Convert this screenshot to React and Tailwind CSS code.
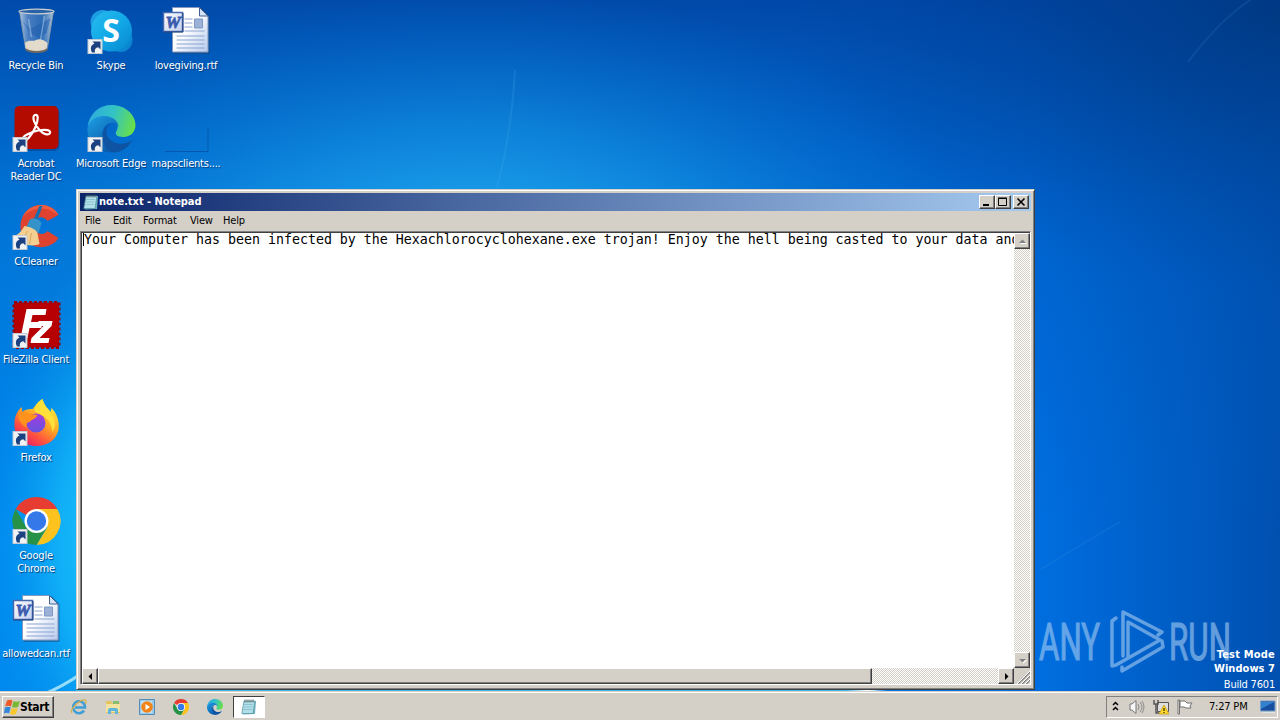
const raised = "border border-t-white border-l-white border-r-[#404040] border-b-[#404040] bg-[#d4d0c8] shadow-[inset_-1px_-1px_#808080]"
const dither = "bg-[repeating-conic-gradient(#d4d0c8_0_25%,#ffffff_0_50%)] bg-[length:2px_2px]"

function Shortcut() {
  return (
    <g>
      <rect x="0.5" y="32.5" width="14" height="14" fill="#f0f2f4" stroke="#c3cad4" />
      <path d="M4.500 45.500c-2-4-1.200-7.500 2.500-9L5 34.500h8v8l-2.200-2.200c-3 .4-4 2.200-3.300 5.200z" fill="#1c4180" />
    </g>
  )
}

function RecycleBin() {
  return (
    <>
      <defs>
        <linearGradient id="bin" x1="0" x2="1">
          <stop offset="0" stopColor="#dce8f2" stopOpacity=".8" />
          <stop offset=".25" stopColor="#6b93c8" stopOpacity=".7" />
          <stop offset=".65" stopColor="#437ab9" stopOpacity=".65" />
          <stop offset="1" stopColor="#d2dde4" stopOpacity=".85" />
        </linearGradient>
      </defs>
      <path d="M7 4h34l-6 37c-1 5-21 5-22 0z" fill="url(#bin)" stroke="#8f9ca5" strokeWidth=".8" />
      <ellipse cx="24" cy="4.500" rx="17.500" ry="2.400" fill="#2862a9" stroke="#c9cdcc" strokeWidth="1.200" />
      <path d="m9 13 8 9 8-4 13-7-4 15-8 5-8-5z" fill="#1d5cab" opacity=".5" />
      <path d="m16 12 3 18m13-21-4 24" stroke="#a9c8e8" strokeOpacity=".55" strokeWidth="1.500" />
      <path d="M12.500 36c4-4 7-1 11-3s8 0 11.500 3l-1 6c-4 3-17 3-21 0z" fill="#e2dacb" />
      <path d="M13 41c4 4 18 4 22 0v2c-3 4-19 4-22 0z" fill="#71695f" />
    </>
  )
}

function SkypeIcon() {
  return (
    <>
      <defs>
        <linearGradient id="sky" x1="0" y1="0" x2="1" y2="1">
          <stop offset="0" stopColor="#28bbee" />
          <stop offset=".5" stopColor="#12a9e7" />
          <stop offset="1" stopColor="#0785ce" />
        </linearGradient>
      </defs>
      <circle cx="15" cy="15" r="12" fill="#1c9ce2" />
      <circle cx="33" cy="33" r="12" fill="#0b87d1" />
      <circle cx="24" cy="24" r="20.500" fill="url(#sky)" />
      <text x="23.500" y="35" textAnchor="middle" fill="#fff" className="font-['Open_Sans',sans-serif] text-[32px] font-bold">S</text>
      <Shortcut />
    </>
  )
}

function WordIcon() {
  return (
    <>
      <defs>
        <linearGradient id="paper" x1="0" y1="0" x2="1" y2="1">
          <stop offset=".45" stopColor="#fff" />
          <stop offset="1" stopColor="#b6c9ed" />
        </linearGradient>
        <linearGradient id="wordBox" x1="0" y1="0" x2="1" y2="1">
          <stop offset="0" stopColor="#fff" />
          <stop offset="1" stopColor="#c3cfee" />
        </linearGradient>
      </defs>
      <path d="M11 1h28l8 8v38H11z" fill="#25466f" opacity=".5" />
      <path d="M10 .5h27l8.500 8.500v36H10z" fill="url(#paper)" stroke="#8199bf" />
      <path d="M37 .5V9h8.500z" fill="#d5e1f4" stroke="#40618e" />
      <path d="M22 12h8m-8 4h8m-8 4h8M14 29h28m-28 4h28m-28 4h28m-28 4h28M22 24h20" stroke="#8ba4d0" />
      <path d="M32 12h8v9h-8z" fill="#9cb1d6" stroke="#7d98c4" />
      <path d="M1 5.500h19v19H1z" fill="url(#wordBox)" stroke="#4668ad" strokeWidth="1.500" />
      <text x="10.500" y="21" textAnchor="middle" fill="#3c5cae" stroke="#3c5cae" strokeWidth=".8" className="font-['Liberation_Serif',serif] text-[17px] font-bold italic">W</text>
      <path d="M1 25h19.500V6" fill="none" stroke="#22407e" />
    </>
  )
}

function AcrobatIcon() {
  return (
    <>
      <rect x="3" y="3" width="44" height="43" rx="5" fill="#06377d" opacity=".5" />
      <rect x="2" y="1" width="44" height="43" rx="5" fill="#b30b00" />
      <path d="M22.500 10c3.500-1.500 3.500 5 .5 12-3.500 8-9.500 15.500-12.500 13-3-3 9-8.500 15-9.500 8-1.500 13-.5 12 2.500-1.500 3-7 1-10.500-3-5-5-8-13.500-4.500-15z" fill="none" stroke="#fff" strokeWidth="2.200" />
      <Shortcut />
    </>
  )
}

function EdgeArt({ id }) {
  return (
    <>
      <defs>
        <linearGradient id={`${id}a`} x1="0" y1=".4" x2="1" y2=".6">
          <stop offset="0" stopColor="#2fabe0" />
          <stop offset=".5" stopColor="#33c3c4" />
          <stop offset="1" stopColor="#6be044" />
        </linearGradient>
        <linearGradient id={`${id}b`} x1="0" y1="0" x2=".7" y2="1">
          <stop offset="0" stopColor="#1c9fe4" />
          <stop offset="1" stopColor="#0c58a8" />
        </linearGradient>
      </defs>
      <path d="M0 22C2 8 12 0 24 0c14 0 24 10 24 20 0 7-5 12-12 12-7 0-9-3-7-6 4-7-2-13-11-14C10 11 4 15 0 22z" fill={`url(#${id}a)`} />
      <path d="M0 23c2-8 9-12 17-12 8 0 14 5 14 11-1-3-5-5-8-4-8 2-10 10-6 18 3 6 8 10 13 11C12 50-1 38 0 23z" fill={`url(#${id}b)`} />
      <path d="M23 18c-5 3-6 12 0 17 7 6 16 4 22 0-5 9-13 13-20 12-12-4-14-24-2-29z" fill="#0e54a2" />
    </>
  )
}

function CCleanerIcon() {
  return (
    <>
      <path d="M46 12C38-2 17-1 10 14 3 29 15 46 31 44c7-1 12-4 15-9l-11-7c-4 5-11 3-13-2-3-10 7-16 13-8z" fill="#df4330" />
      <path d="M46 12C38-2 17-1 10 14c8-8 20-11 29-6z" fill="#f05c40" />
      <path d="m30 3-7 19-4-1L27 3z" fill="#1370ad" />
      <path d="M17 17c4-3 10-1 12 3l-3 10-12-6z" fill="#3693ca" />
      <path d="M12 23c6 1 11 3 13 7l2 11c-10 4-20-1-26-8 5-1 8-5 11-10z" fill="#f4cf91" />
      <path d="m15 28-5 10m9-8-2 11" stroke="#d8a75f" />
      <Shortcut />
    </>
  )
}

function FileZillaIcon() {
  return (
    <>
      <rect x="1.500" y="1.500" width="45" height="45" fill="#b50004" stroke="#9b0208" strokeWidth="3" strokeDasharray="3 2" />
      <path d="M2.500 2.500h43v43h-43z" fill="#b60003" />
      <path d="M8 37 14 8h20l-1 6H20l-1.500 7H30l-1.200 6H17l-2 10zm18-17h14l-1 5-12 12h10l-1 5H18l1-5 12-12h-6z" fill="#fff" />
      <Shortcut />
    </>
  )
}

function FirefoxIcon() {
  return (
    <>
      <defs>
        <linearGradient id="ff" x1=".9" y1=".1" x2=".3" y2="1">
          <stop offset="0" stopColor="#fff23d" />
          <stop offset=".45" stopColor="#ffa425" />
          <stop offset=".75" stopColor="#ff5140" />
          <stop offset="1" stopColor="#e81f65" />
        </linearGradient>
        <linearGradient id="globe" x1="0" y1="0" x2="0" y2="1">
          <stop offset="0" stopColor="#a53bdf" />
          <stop offset="1" stopColor="#6653df" />
        </linearGradient>
      </defs>
      <path d="M30 0c2 7 5 9 8 13l1-4c6 6 8 14 7 22-3 11-12 16-22 16C10 47 1 37 2 24c0-7 3-12 7-16l1 5c3-3 7-3 10-3 2-1 3-6 10-10z" fill="url(#ff)" />
      <path d="M30 0c2 7 5 9 8 13 5 7 6 14 2 20-1-10-6-16-17-20-3-4 1-8 7-13z" fill="#ffe03b" />
      <circle cx="23.500" cy="24" r="9.500" fill="url(#globe)" />
      <path d="M6 15c3-4 8-2 12 0l7 1c-1 4-6 4-8 7-3 0-4 3-3 6-5-4-9-8-8-14z" fill="#ff911d" />
      <Shortcut />
    </>
  )
}

function ChromeArt() {
  return (
    <>
      <path d="M24 24 3.200 12A24 24 0 0 1 44.800 12z" fill="#e63c31" />
      <path d="M24 12h20.800A24 24 0 0 1 24 48l11-18z" fill="#fcc31e" />
      <path d="M3.200 12A24 24 0 0 0 24 48l10.400-18H13.600z" fill="#279247" />
      <circle cx="24" cy="24" r="12" fill="#fff" />
      <circle cx="24" cy="24" r="9.700" fill="#3478ea" />
    </>
  )
}

function NotepadArt() {
  return (
    <>
      <path d="M4 2h11l-1 13-12 .5z" fill="#6db4c5" />
      <path d="M3 2h11l-2 12.500H.8z" fill="#b3e0e8" stroke="#4f8c9b" strokeWidth=".7" />
      <path d="M3 5.500h9M2.500 8h9M2 10.500h9" stroke="#7db8c6" strokeWidth=".7" />
      <path d="M4 .5v3m2-3v3m2-3v3m2-3v3m2-3v3" stroke="#485057" strokeWidth=".8" />
    </>
  )
}

function DesktopIcon({ label, children }) {
  return (
    <div className="flex h-[98px] w-[75px] shrink-0 flex-col items-center">
      <svg className="ml-px h-12 w-12 shrink-0 overflow-visible" viewBox="0 0 48 48">{children}</svg>
      <span className="mt-1 w-[90px] whitespace-pre text-center leading-[13px] text-white [text-shadow:1px_1px_1px_#003878]">{label}</span>
    </div>
  )
}

function Wallpaper() {
  return (
    <svg className="absolute inset-0 h-full w-full" viewBox="0 0 1280 720" preserveAspectRatio="none">
      <defs>
        <linearGradient id="base" x1="0" x2="1">
          <stop offset="0" stopColor="#0089ee" />
          <stop offset=".4" stopColor="#0789e6" />
          <stop offset=".81" stopColor="#006ee0" />
          <stop offset="1" stopColor="#0050b0" />
        </linearGradient>
        <linearGradient id="top" x1="0" y1="0" x2="0" y2="1">
          <stop offset="0" stopColor="#003f9f" stopOpacity=".85" />
          <stop offset=".28" stopColor="#004fae" stopOpacity=".4" />
          <stop offset=".75" stopColor="#0060c0" stopOpacity="0" />
        </linearGradient>
        <radialGradient id="glow" gradientUnits="userSpaceOnUse" cx="0" cy="0" r="1" gradientTransform="translate(470 270) scale(520 285)">
          <stop offset="0" stopColor="#28b5f5" />
          <stop offset=".5" stopColor="#1598e9" stopOpacity=".55" />
          <stop offset="1" stopColor="#0070d5" stopOpacity="0" />
        </radialGradient>
        <radialGradient id="cyan" gradientUnits="userSpaceOnUse" cx="0" cy="0" r="1" gradientTransform="translate(130 540) scale(150 290)">
          <stop offset="0" stopColor="#27d3ff" />
          <stop offset=".5" stopColor="#14b9fa" stopOpacity=".75" />
          <stop offset="1" stopColor="#0090ef" stopOpacity="0" />
        </radialGradient>
        <radialGradient id="corner" cx="1" cy=".02" r=".38">
          <stop offset="0" stopColor="#003678" stopOpacity=".7" />
          <stop offset="1" stopColor="#004091" stopOpacity="0" />
        </radialGradient>
        <linearGradient id="flare">
          <stop offset="0" stopColor="#fff" stopOpacity="0" />
          <stop offset=".5" stopColor="#fff" />
          <stop offset="1" stopColor="#fff" stopOpacity="0" />
        </linearGradient>
      </defs>
      <path d="M0 0h1280v720H0z" fill="url(#base)" />
      <path d="M0 0h1280v720H0z" fill="url(#top)" />
      <path d="M0 0h1280v720H0z" fill="url(#glow)" />
      <path d="M0 0h1280v720H0z" fill="url(#cyan)" />
      <path d="M0 0h1280v720H0z" fill="url(#corner)" />
      <path d="M515 70q-3 60-18 118" fill="none" stroke="#58b9f3" strokeOpacity=".16" strokeWidth="2" />
      <path d="M1250 0q-32 22-62 62M1040 570q38-24 80-48" fill="none" stroke="#58a6e8" strokeOpacity=".13" strokeWidth="2" />
      <path d="M42 695q22-9 40-22" fill="none" stroke="#c5f4ff" strokeWidth="3" opacity=".75" />
      <path d="M76 691h800" stroke="#3db9f0" strokeWidth="2" />
      <path d="M846 690h42v2h-42z" fill="url(#flare)" />
    </svg>
  )
}

function Watermark() {
  return (
    <svg className="absolute left-[1036px] top-[606px] h-[70px] w-[200px]" viewBox="0 0 200 70">
      <g fill="#a6ccf2" stroke="#a6ccf2" strokeWidth="1.200" opacity=".6" className="font-[Roboto,sans-serif] text-[51px] tracking-normal">
        <text x="3" y="54" textLength="61" lengthAdjust="spacingAndGlyphs">ANY</text>
        <text x="133" y="54" textLength="62" lengthAdjust="spacingAndGlyphs">RUN</text>
      </g>
      <g fill="none" stroke="#a6ccf2" strokeWidth="3.500" strokeLinejoin="round" strokeLinecap="round" opacity=".6">
        <path d="m80 12-4 3v45l4-1 44-25-32-18v36" />
        <path d="m122 29 4-3-39-20v44M86 61v4l41-24-1-6" />
      </g>
    </svg>
  )
}

function ScrollButton({ d, dim }) {
  return (
    <div className={`flex h-4 w-4 shrink-0 items-center justify-center ${raised}`}>
      <svg className="h-[9px] w-[9px]" viewBox="0 0 9 9">
        {dim && <path d={d} fill="#fff" transform="translate(1 1)" />}
        <path d={d} fill={dim ? "#808080" : "#000"} />
      </svg>
    </div>
  )
}

function NotepadWindow() {
  return (
    <div className="absolute left-[76px] top-[189px] flex h-[501px] w-[959px] flex-col border border-b-[#404040] border-l-[#d4d0c8] border-r-[#404040] border-t-[#d4d0c8] bg-[#d4d0c8] p-[3px] pb-1 shadow-[inset_1px_1px_#fff,inset_-1px_-1px_#808080]">
      <div className="flex h-[18px] shrink-0 items-center bg-linear-to-r/srgb from-[#0a246a] to-[#a6caf0] pl-[3px] pr-[2px] text-white">
        <svg className="h-4 w-4" viewBox="0 0 16 16"><NotepadArt /></svg>
        <span className="flex-1 whitespace-nowrap text-[11px] font-bold tracking-[-0.04px]">note.txt - Notepad</span>
        <div className="flex">
          <div className={`h-[14px] w-4 ${raised}`}>
            <svg className="h-3 w-[14px]" viewBox="0 0 14 12"><path d="M3 8h6v2H3z" /></svg>
          </div>
          <div className={`h-[14px] w-4 ${raised}`}>
            <svg className="h-3 w-[14px]" viewBox="0 0 14 12"><path d="M2.500 2.500h8v7h-8zM2 2h9" fill="none" stroke="#000" /></svg>
          </div>
          <div className={`ml-0.5 h-[14px] w-4 ${raised}`}>
            <svg className="h-3 w-[14px]" viewBox="0 0 14 12"><path d="m3.500 2.500 7 7m0-7-7 7" stroke="#000" strokeWidth="1.600" /></svg>
          </div>
        </div>
      </div>
      <div className="flex h-5 shrink-0 items-center gap-3 pl-[5px] pt-px text-black">
        <span className="w-4">File</span>
        <span className="w-[18px]">Edit</span>
        <span className="w-[35px]">Format</span>
        <span className="w-[21px]">View</span>
        <span>Help</span>
      </div>
      <div className="flex min-h-0 flex-1 flex-col border border-b-white border-l-[#808080] border-r-white border-t-[#808080] bg-white shadow-[inset_1px_1px_#404040] pl-px pt-px">
        <div className="flex min-h-0 flex-1">
          <div className="min-w-0 flex-1 overflow-hidden">
            <div className="ml-px h-[13px] whitespace-nowrap border-l border-black font-['DejaVu_Sans_Mono',monospace] text-[13.290px] leading-[13px] tracking-normal text-black">
              Your Computer has been infected by the Hexachlorocyclohexane.exe trojan! Enjoy the hell being casted to your data and
            </div>
          </div>
          <div className={`flex w-4 flex-col justify-between ${dither}`}>
            <ScrollButton d="M1 6h7L4.500 2.500z" dim />
            <ScrollButton d="M1 3h7L4.500 6.500z" dim />
          </div>
        </div>
        <div className="flex h-4 shrink-0">
          <div className={`flex flex-1 ${dither}`}>
            <ScrollButton d="M6 1v7L2.500 4.500z" />
            <div className={`h-4 w-[774px] ${raised}`} />
            <div className="flex-1" />
            <ScrollButton d="M3 1v7l3.500-3.500z" />
          </div>
          <svg className="h-4 w-4 bg-[#d4d0c8]" viewBox="0 0 16 16">
            <path d="M4 16 16 4M8 16l8-8m-4 8 4-4" stroke="#808080" strokeWidth="1.500" />
            <path d="M3 16 16 3M7 16l9-9m-5 9 5-5" stroke="#fff" />
          </svg>
        </div>
      </div>
    </div>
  )
}

function Taskbar() {
  return (
    <div className="absolute inset-x-0 bottom-0 flex h-[29px] items-center border-t border-[#d4d0c8] bg-[#d4d0c8] pl-0.5 pr-[2px] pt-0.5 text-black shadow-[inset_0_1px_#fff]">
      <div className={`flex h-[22px] w-[52px] items-center pl-px ${raised}`}>
        <svg className="h-4 w-4 shrink-0" viewBox="0 0 16 16">
          <path d="M3 1.500Q6 0 8.500 1.500L7 7.500Q4 6 1 7.500z" fill="#ed5a27" />
          <path d="M9.500 2q3 1.500 6.500 0l-2 6Q11 9 8 8z" fill="#78b834" />
          <path d="M.8 8.500q3-1.500 6 0L5 14.500q-2-1.500-5 0z" fill="#3388d8" />
          <path d="M7.700 9q3 1.500 6 0L12 15q-3 1.500-6 0z" fill="#f8c72d" />
        </svg>
        <span className="text-[12px] font-bold tracking-[-0.3px]">Start</span>
      </div>
      <div className="ml-[17px] flex items-center gap-[18px]">
        <svg className="h-4 w-4 overflow-visible" viewBox="0 0 16 16">
          <path d="M13 11.500a6 6 0 1 1 1-3H4" fill="none" stroke="#3e9ed5" strokeWidth="2.500" />
          <path d="M1 14C-2 11 9 0 14 1c2 1 1 3 0 4" fill="none" stroke="#d7ae45" strokeWidth="1.200" />
        </svg>
        <svg className="h-4 w-4" viewBox="0 0 16 16">
          <path d="M1 4V2h5l1 2h8v10H1z" fill="#e4c363" />
          <path d="M1 5h14v8H1z" fill="#f3e3a0" />
          <path d="M3 15v-4q0-2 2-2h6q2 0 2 2v4h-3v-3H6v3z" fill="#5fb5de" />
          <path d="M8 2h6v3H8z" fill="#88bd72" />
        </svg>
        <svg className="h-4 w-4" viewBox="0 0 16 16">
          <path d="M.5.5h15v15H.5z" fill="#9ccae8" stroke="#518dbb" />
          <path d="M2 2h11v12H2z" fill="#c2dfed" />
          <circle cx="8" cy="8" r="5.800" fill="#f18416" />
          <path d="m6.500 5 4.500 3-4.500 3z" fill="#fff" />
        </svg>
        <svg className="h-4 w-4" viewBox="0 0 48 48"><ChromeArt /></svg>
        <svg className="h-4 w-4" viewBox="0 0 48 48"><EdgeArt id="es" /></svg>
      </div>
      <div className="ml-[10px] flex h-[22px] w-8 items-center justify-center border border-b-white border-l-[#404040] border-r-white border-t-[#404040] bg-white">
        <svg className="h-4 w-4" viewBox="0 0 16 16"><NotepadArt /></svg>
      </div>
      <div className="ml-auto flex h-[22px] w-[172px] items-center border border-b-white border-l-[#808080] border-r-white border-t-[#808080] pl-[5px]">
        <svg className="h-4 w-[7px]" viewBox="0 0 7 16"><path d="m1 6 2.500-2.500L6 6m-5 5 2.500-2.500L6 11" fill="none" stroke="#000" strokeWidth="1.500" /></svg>
        <svg className="ml-2.5 h-4 w-4" viewBox="0 0 16 16">
          <path d="M1 5h2l4-3.500v13L3 11H1z" fill="#f7f7f7" stroke="#777" />
          <path d="M9 5q2 3 0 6m2-8q4 5 0 10m2-11q4 6 0 12" fill="none" stroke="#8b8b8b" />
        </svg>
        <svg className="ml-2 h-4 w-4" viewBox="0 0 16 16">
          <path d="M4.500 3.500h11v9h-11z" fill="#dedede" stroke="#555" />
          <path d="M1 1v4h4V1M3 5v9h3" fill="none" stroke="#555" strokeWidth="1.500" />
          <path d="m11 6 5 9H6z" fill="#ffda28" stroke="#c39412" strokeWidth=".7" />
          <path d="M10.500 9h1v3h-1zm0 4h1v1h-1z" />
        </svg>
        <svg className="ml-2 h-4 w-4" viewBox="0 0 16 16"><path d="M1 1h1.500v14H1zM3 2h5l2 2h5l-2 3 1 2H9L7 8H3z" fill="#fff" stroke="#707070" /></svg>
        <span className="ml-4 w-10 whitespace-nowrap">7:27 PM</span>
        <svg className="ml-[11px] h-4 w-4 shrink-0" viewBox="0 0 16 16">
          <path d="M.5 2h14.500v10H.5z" fill="#174e9d" stroke="#7a9fca" />
          <path d="M1 3h13L1 10z" fill="#3282ce" />
          <path d="M1 13h14v1H4z" fill="#e0e6ec" />
        </svg>
      </div>
    </div>
  )
}

export default function App() {
  return (
    <main className="relative h-[720px] w-[1280px] overflow-hidden bg-[#0070d8] font-['DejaVu_Sans_Condensed','DejaVu_Sans',sans-serif] text-[11px] tracking-[-0.2px]">
      <Wallpaper />
      <div className="relative flex -translate-x-[1.500px] pt-[7px]">
        <div className="flex flex-col">
          <DesktopIcon label="Recycle Bin"><RecycleBin /></DesktopIcon>
          <DesktopIcon label={"Acrobat\nReader DC"}><AcrobatIcon /></DesktopIcon>
          <DesktopIcon label="CCleaner"><CCleanerIcon /></DesktopIcon>
          <DesktopIcon label="FileZilla Client"><FileZillaIcon /></DesktopIcon>
          <DesktopIcon label="Firefox"><FirefoxIcon /></DesktopIcon>
          <DesktopIcon label={"Google\nChrome"}><ChromeArt /><Shortcut /></DesktopIcon>
          <DesktopIcon label="allowedcan.rtf"><WordIcon /></DesktopIcon>
        </div>
        <div className="flex flex-col">
          <DesktopIcon label="Skype"><SkypeIcon /></DesktopIcon>
          <DesktopIcon label="Microsoft Edge"><EdgeArt id="ed" /><Shortcut /></DesktopIcon>
        </div>
        <div className="flex flex-col">
          <DesktopIcon label="lovegiving.rtf"><WordIcon /></DesktopIcon>
          <DesktopIcon label="mapsclients....">
            <path d="M2.500 46.500h43V23" fill="none" stroke="#0558ad" />
          </DesktopIcon>
        </div>
      </div>
      <Watermark />
      <div className="absolute bottom-[28px] right-[5px] text-right leading-[14px] text-white">
        <p className="font-bold tracking-[0.2px]">Test Mode</p>
        <p className="font-bold tracking-[0.050px]">Windows 7</p>
        <p className="mt-0.5">Build 7601</p>
      </div>
      <NotepadWindow />
      <Taskbar />
    </main>
  )
}
